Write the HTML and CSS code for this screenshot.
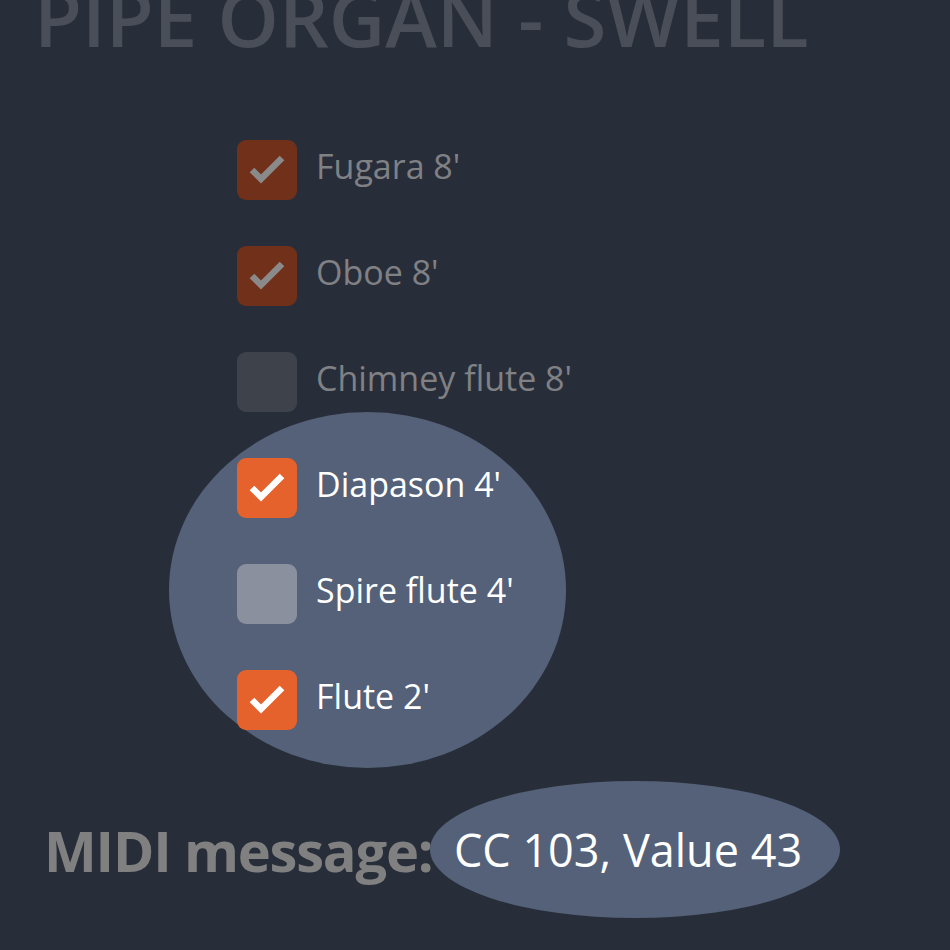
FILE: index.html
```html
<!DOCTYPE html>
<html>
<head>
    <title>Pipe Organ - Swell</title>
    <link rel="stylesheet" href="styles.css">
</head>
<body>
    <h1 class="title">PIPE ORGAN - SWELL</h1>

    <div class="stops">
        <div class="stop dim checked">
            <span class="box"><svg viewBox="0 0 60 60"><polyline points="15,30 24,39 45,18"/></svg></span>
            <span class="name">Fugara 8'</span>
        </div>
        <div class="stop dim checked">
            <span class="box"><svg viewBox="0 0 60 60"><polyline points="15,30 24,39 45,18"/></svg></span>
            <span class="name">Oboe 8'</span>
        </div>
        <div class="stop dim">
            <span class="box"></span>
            <span class="name">Chimney flute 8'</span>
        </div>

        <!-- stops in the current selection -->
        <div class="focus">
            <div class="stop checked">
                <span class="box"><svg viewBox="0 0 60 60"><polyline points="15,30 24,39 45,18"/></svg></span>
                <span class="name">Diapason 4'</span>
            </div>
            <div class="stop">
                <span class="box"></span>
                <span class="name">Spire flute 4'</span>
            </div>
            <div class="stop checked">
                <span class="box"><svg viewBox="0 0 60 60"><polyline points="15,30 24,39 45,18"/></svg></span>
                <span class="name">Flute 2'</span>
            </div>
        </div>
    </div>

    <div class="midi">
        <span class="midi-label">MIDI message:</span>
        <span class="midi-value">CC 103, Value 43</span>
    </div>
</body>
</html>
```

FILE: styles.css
```css
body {
    font-family: "Open Sans", "DejaVu Sans", sans-serif;
    background-color: #282e39;
    margin: 0;
    padding: 0;
    overflow: hidden;
}

.title {
    margin: -22px 0 0 0;
    padding-left: 34px;
    font-size: 78px;
    line-height: 1;
    font-weight: 600;
    color: #4a4e58;
    white-space: nowrap;
}

.stops {
    display: flex;
    flex-direction: column;
    gap: 46px;
    margin-top: 84px;
    padding-left: 237px;
}

.focus {
    position: relative;
    isolation: isolate;
    display: flex;
    flex-direction: column;
    gap: 46px;
}

.focus::before {
    content: "";
    position: absolute;
    left: -68px;
    top: -46px;
    width: 397px;
    height: 356px;
    border-radius: 50%;
    background-color: #546178;
    z-index: -1;
}

.stop {
    display: flex;
    align-items: center;
    gap: 19px;
    height: 60px;
}

.box {
    width: 60px;
    height: 60px;
    border-radius: 9px;
    background-color: #8a909d;
    flex-shrink: 0;
}

.box svg {
    display: block;
    width: 60px;
    height: 60px;
}

.box polyline {
    fill: none;
    stroke: #fff;
    stroke-width: 6.5;
}

.stop.checked .box {
    background-color: #e5622d;
}

.name {
    font-size: 34px;
    margin-bottom: 8px;
    color: #fff;
    white-space: nowrap;
}

.stop.dim .box {
    background-color: #3e424b;
}

.stop.dim.checked .box {
    background-color: #70301a;
}

.stop.dim .box polyline {
    stroke: #8a8a8a;
}

.stop.dim .name {
    color: #808185;
}

.midi {
    display: flex;
    align-items: center;
    margin-top: 51px;
    padding-left: 44px;
}

.midi-label {
    font-size: 56px;
    font-weight: 700;
    letter-spacing: -1.2px;
    color: #808080;
    white-space: nowrap;
    width: 386px;
    flex-shrink: 0;
}

.midi-value {
    display: flex;
    align-items: center;
    box-sizing: border-box;
    width: 410px;
    height: 137px;
    padding-left: 24px;
    border-radius: 50%;
    background-color: #546178;
    font-size: 45px;
    color: #fff;
    white-space: nowrap;
}
```
